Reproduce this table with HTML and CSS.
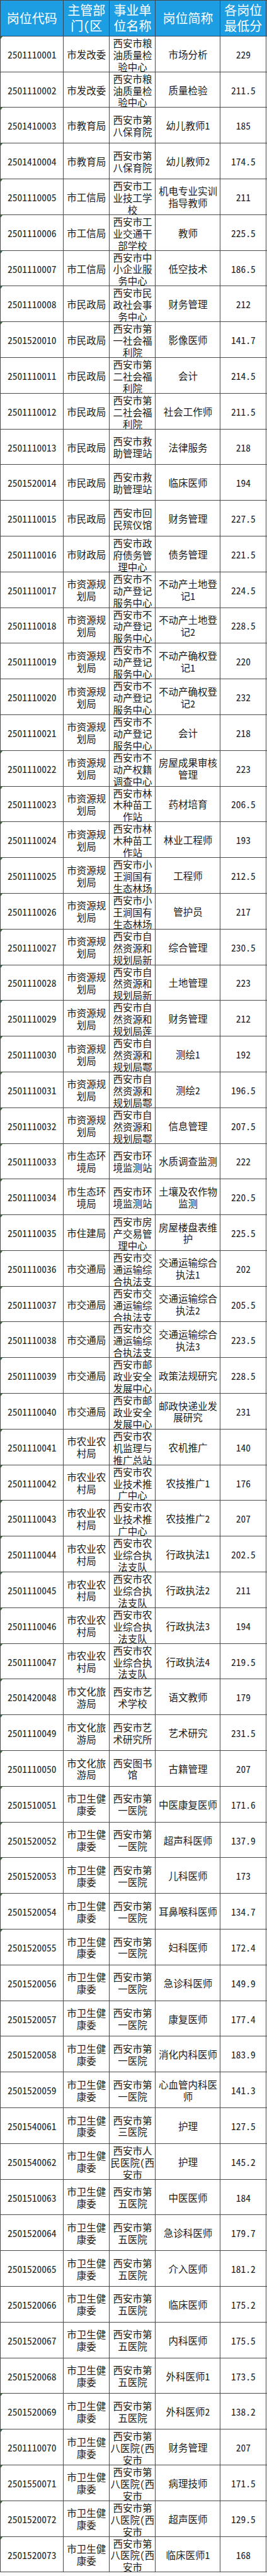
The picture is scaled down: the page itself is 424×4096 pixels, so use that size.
FILE: index.html
```html
<!DOCTYPE html>
<html lang="zh-CN">
<head>
<meta charset="utf-8">
<title>岗位最低分</title>
<link rel="stylesheet" href="styles.css">
</head>
<body>
<div class="sheet">
  <div class="row head"><div class="c">岗位代码</div><div class="c">主管部门（区</div><div class="c">事业单位名称</div><div class="c">岗位简称</div><div class="c">各岗位最低分</div></div>
  <div class="row"><div class="c code m">2501110001</div><div class="c">市发改委</div><div class="c">西安市粮油质量检验中心</div><div class="c">市场分析</div><div class="c">229</div></div>
  <div class="row"><div class="c code">2501110002</div><div class="c">市发改委</div><div class="c">西安市粮油质量检验中心</div><div class="c">质量检验</div><div class="c">211.5</div></div>
  <div class="row"><div class="c code m">2501410003</div><div class="c">市教育局</div><div class="c">西安市第八保育院</div><div class="c">幼儿教师1</div><div class="c">185</div></div>
  <div class="row"><div class="c code m">2501410004</div><div class="c">市教育局</div><div class="c">西安市第八保育院</div><div class="c">幼儿教师2</div><div class="c">174.5</div></div>
  <div class="row"><div class="c code m">2501110005</div><div class="c">市工信局</div><div class="c">西安市工业技工学校</div><div class="c">机电专业实训指导教师</div><div class="c">211</div></div>
  <div class="row"><div class="c code m">2501110006</div><div class="c">市工信局</div><div class="c">西安市工业交通干部学校</div><div class="c">教师</div><div class="c">225.5</div></div>
  <div class="row"><div class="c code m">2501110007</div><div class="c">市工信局</div><div class="c">西安市中小企业服务中心</div><div class="c">低空技术</div><div class="c">186.5</div></div>
  <div class="row"><div class="c code m">2501110008</div><div class="c">市民政局</div><div class="c">西安市民政社会事务中心</div><div class="c">财务管理</div><div class="c">212</div></div>
  <div class="row"><div class="c code m">2501520010</div><div class="c">市民政局</div><div class="c">西安市第一社会福利院</div><div class="c">影像医师</div><div class="c">141.7</div></div>
  <div class="row"><div class="c code">2501110011</div><div class="c">市民政局</div><div class="c">西安市第二社会福利院</div><div class="c">会计</div><div class="c">214.5</div></div>
  <div class="row"><div class="c code">2501110012</div><div class="c">市民政局</div><div class="c">西安市第二社会福利院</div><div class="c">社会工作师</div><div class="c">211.5</div></div>
  <div class="row"><div class="c code">2501110013</div><div class="c">市民政局</div><div class="c">西安市救助管理站</div><div class="c">法律服务</div><div class="c">218</div></div>
  <div class="row"><div class="c code">2501520014</div><div class="c">市民政局</div><div class="c">西安市救助管理站</div><div class="c">临床医师</div><div class="c">194</div></div>
  <div class="row"><div class="c code">2501110015</div><div class="c">市民政局</div><div class="c">西安市回民殡仪馆</div><div class="c">财务管理</div><div class="c">227.5</div></div>
  <div class="row"><div class="c code">2501110016</div><div class="c">市财政局</div><div class="c">西安市政府债务管理中心</div><div class="c">债务管理</div><div class="c">221.5</div></div>
  <div class="row"><div class="c code">2501110017</div><div class="c">市资源规划局</div><div class="c">西安市不动产登记服务中心</div><div class="c">不动产土地登记1</div><div class="c">224.5</div></div>
  <div class="row"><div class="c code">2501110018</div><div class="c">市资源规划局</div><div class="c">西安市不动产登记服务中心</div><div class="c">不动产土地登记2</div><div class="c">228.5</div></div>
  <div class="row"><div class="c code">2501110019</div><div class="c">市资源规划局</div><div class="c">西安市不动产登记服务中心</div><div class="c">不动产确权登记1</div><div class="c">220</div></div>
  <div class="row"><div class="c code">2501110020</div><div class="c">市资源规划局</div><div class="c">西安市不动产登记服务中心</div><div class="c">不动产确权登记2</div><div class="c">232</div></div>
  <div class="row"><div class="c code">2501110021</div><div class="c">市资源规划局</div><div class="c">西安市不动产登记服务中心</div><div class="c">会计</div><div class="c">218</div></div>
  <div class="row"><div class="c code m">2501110022</div><div class="c">市资源规划局</div><div class="c">西安市不动产权籍调查中心</div><div class="c">房屋成果审核管理</div><div class="c">223</div></div>
  <div class="row"><div class="c code m">2501110023</div><div class="c">市资源规划局</div><div class="c">西安市林木种苗工作站</div><div class="c">药材培育</div><div class="c">206.5</div></div>
  <div class="row"><div class="c code m">2501110024</div><div class="c">市资源规划局</div><div class="c">西安市林木种苗工作站</div><div class="c">林业工程师</div><div class="c">193</div></div>
  <div class="row"><div class="c code m">2501110025</div><div class="c">市资源规划局</div><div class="c">西安市小王涧国有生态林场</div><div class="c">工程师</div><div class="c">212.5</div></div>
  <div class="row"><div class="c code m">2501110026</div><div class="c">市资源规划局</div><div class="c">西安市小王涧国有生态林场</div><div class="c">管护员</div><div class="c">217</div></div>
  <div class="row"><div class="c code m">2501110027</div><div class="c">市资源规划局</div><div class="c">西安市自然资源和规划局新</div><div class="c">综合管理</div><div class="c">230.5</div></div>
  <div class="row"><div class="c code m">2501110028</div><div class="c">市资源规划局</div><div class="c">西安市自然资源和规划局新</div><div class="c">土地管理</div><div class="c">223</div></div>
  <div class="row"><div class="c code m">2501110029</div><div class="c">市资源规划局</div><div class="c">西安市自然资源和规划局莲</div><div class="c">财务管理</div><div class="c">212</div></div>
  <div class="row"><div class="c code m">2501110030</div><div class="c">市资源规划局</div><div class="c">西安市自然资源和规划局鄠</div><div class="c">测绘1</div><div class="c">192</div></div>
  <div class="row"><div class="c code m">2501110031</div><div class="c">市资源规划局</div><div class="c">西安市自然资源和规划局鄠</div><div class="c">测绘2</div><div class="c">196.5</div></div>
  <div class="row"><div class="c code m">2501110032</div><div class="c">市资源规划局</div><div class="c">西安市自然资源和规划局鄠</div><div class="c">信息管理</div><div class="c">207.5</div></div>
  <div class="row"><div class="c code m">2501110033</div><div class="c">市生态环境局</div><div class="c">西安市环境监测站</div><div class="c">水质调查监测</div><div class="c">222</div></div>
  <div class="row"><div class="c code m">2501110034</div><div class="c">市生态环境局</div><div class="c">西安市环境监测站</div><div class="c">土壤及农作物监测</div><div class="c">220.5</div></div>
  <div class="row"><div class="c code m">2501110035</div><div class="c">市住建局</div><div class="c">西安市房产交易管理中心</div><div class="c">房屋楼盘表维护</div><div class="c">225.5</div></div>
  <div class="row"><div class="c code m">2501110036</div><div class="c">市交通局</div><div class="c">西安市交通运输综合执法支</div><div class="c">交通运输综合执法1</div><div class="c">202</div></div>
  <div class="row"><div class="c code m">2501110037</div><div class="c">市交通局</div><div class="c">西安市交通运输综合执法支</div><div class="c">交通运输综合执法2</div><div class="c">205.5</div></div>
  <div class="row"><div class="c code m">2501110038</div><div class="c">市交通局</div><div class="c">西安市交通运输综合执法支</div><div class="c">交通运输综合执法3</div><div class="c">223.5</div></div>
  <div class="row"><div class="c code m">2501110039</div><div class="c">市交通局</div><div class="c">西安市邮政业安全发展中心</div><div class="c">政策法规研究</div><div class="c">228.5</div></div>
  <div class="row"><div class="c code m">2501110040</div><div class="c">市交通局</div><div class="c">西安市邮政业安全发展中心</div><div class="c">邮政快递业发展研究</div><div class="c">231</div></div>
  <div class="row"><div class="c code m">2501110041</div><div class="c">市农业农村局</div><div class="c">西安市农机监理与推广总站</div><div class="c">农机推广</div><div class="c">140</div></div>
  <div class="row"><div class="c code m">2501110042</div><div class="c">市农业农村局</div><div class="c">西安市农业技术推广中心</div><div class="c">农技推广1</div><div class="c">176</div></div>
  <div class="row"><div class="c code m">2501110043</div><div class="c">市农业农村局</div><div class="c">西安市农业技术推广中心</div><div class="c">农技推广2</div><div class="c">207</div></div>
  <div class="row"><div class="c code m">2501110044</div><div class="c">市农业农村局</div><div class="c">西安市农业综合执法支队</div><div class="c">行政执法1</div><div class="c">202.5</div></div>
  <div class="row"><div class="c code m">2501110045</div><div class="c">市农业农村局</div><div class="c">西安市农业综合执法支队</div><div class="c">行政执法2</div><div class="c">211</div></div>
  <div class="row"><div class="c code m">2501110046</div><div class="c">市农业农村局</div><div class="c">西安市农业综合执法支队</div><div class="c">行政执法3</div><div class="c">194</div></div>
  <div class="row"><div class="c code m">2501110047</div><div class="c">市农业农村局</div><div class="c">西安市农业综合执法支队</div><div class="c">行政执法4</div><div class="c">219.5</div></div>
  <div class="row"><div class="c code m">2501420048</div><div class="c">市文化旅游局</div><div class="c">西安市艺术学校</div><div class="c">语文教师</div><div class="c">179</div></div>
  <div class="row"><div class="c code m">2501110049</div><div class="c">市文化旅游局</div><div class="c">西安市艺术研究所</div><div class="c">艺术研究</div><div class="c">231.5</div></div>
  <div class="row"><div class="c code m">2501110050</div><div class="c">市文化旅游局</div><div class="c">西安图书馆</div><div class="c">古籍管理</div><div class="c">207</div></div>
  <div class="row"><div class="c code m">2501510051</div><div class="c">市卫生健康委</div><div class="c">西安市第一医院</div><div class="c">中医康复医师</div><div class="c">171.6</div></div>
  <div class="row"><div class="c code m">2501520052</div><div class="c">市卫生健康委</div><div class="c">西安市第一医院</div><div class="c">超声科医师</div><div class="c">137.9</div></div>
  <div class="row"><div class="c code m">2501520053</div><div class="c">市卫生健康委</div><div class="c">西安市第一医院</div><div class="c">儿科医师</div><div class="c">173</div></div>
  <div class="row"><div class="c code m">2501520054</div><div class="c">市卫生健康委</div><div class="c">西安市第一医院</div><div class="c">耳鼻喉科医师</div><div class="c">134.7</div></div>
  <div class="row"><div class="c code m">2501520055</div><div class="c">市卫生健康委</div><div class="c">西安市第一医院</div><div class="c">妇科医师</div><div class="c">172.4</div></div>
  <div class="row"><div class="c code">2501520056</div><div class="c">市卫生健康委</div><div class="c">西安市第一医院</div><div class="c">急诊科医师</div><div class="c">149.9</div></div>
  <div class="row"><div class="c code">2501520057</div><div class="c">市卫生健康委</div><div class="c">西安市第一医院</div><div class="c">康复医师</div><div class="c">177.4</div></div>
  <div class="row"><div class="c code">2501520058</div><div class="c">市卫生健康委</div><div class="c">西安市第一医院</div><div class="c">消化内科医师</div><div class="c">183.9</div></div>
  <div class="row"><div class="c code">2501520059</div><div class="c">市卫生健康委</div><div class="c">西安市第一医院</div><div class="c">心血管内科医师</div><div class="c">141.3</div></div>
  <div class="row"><div class="c code">2501540061</div><div class="c">市卫生健康委</div><div class="c">西安市第三医院</div><div class="c">护理</div><div class="c">127.5</div></div>
  <div class="row"><div class="c code">2501540062</div><div class="c">市卫生健康委</div><div class="c">西安市人民医院（西安市</div><div class="c">护理</div><div class="c">145.2</div></div>
  <div class="row"><div class="c code">2501510063</div><div class="c">市卫生健康委</div><div class="c">西安市第五医院</div><div class="c">中医医师</div><div class="c">184</div></div>
  <div class="row"><div class="c code">2501520064</div><div class="c">市卫生健康委</div><div class="c">西安市第五医院</div><div class="c">急诊科医师</div><div class="c">179.7</div></div>
  <div class="row"><div class="c code">2501520065</div><div class="c">市卫生健康委</div><div class="c">西安市第五医院</div><div class="c">介入医师</div><div class="c">181.2</div></div>
  <div class="row"><div class="c code">2501520066</div><div class="c">市卫生健康委</div><div class="c">西安市第五医院</div><div class="c">临床医师</div><div class="c">175.2</div></div>
  <div class="row"><div class="c code">2501520067</div><div class="c">市卫生健康委</div><div class="c">西安市第五医院</div><div class="c">内科医师</div><div class="c">175.5</div></div>
  <div class="row"><div class="c code">2501520068</div><div class="c">市卫生健康委</div><div class="c">西安市第五医院</div><div class="c">外科医师1</div><div class="c">173.5</div></div>
  <div class="row"><div class="c code m">2501520069</div><div class="c">市卫生健康委</div><div class="c">西安市第五医院</div><div class="c">外科医师2</div><div class="c">138.2</div></div>
  <div class="row"><div class="c code m">2501110070</div><div class="c">市卫生健康委</div><div class="c">西安市第八医院（西安市</div><div class="c">财务管理</div><div class="c">207</div></div>
  <div class="row"><div class="c code m">2501550071</div><div class="c">市卫生健康委</div><div class="c">西安市第八医院（西安市</div><div class="c">病理技师</div><div class="c">171.5</div></div>
  <div class="row"><div class="c code m">2501520072</div><div class="c">市卫生健康委</div><div class="c">西安市第八医院（西安市</div><div class="c">超声医师</div><div class="c">129.5</div></div>
  <div class="row"><div class="c code m">2501520073</div><div class="c">市卫生健康委</div><div class="c">西安市第八医院（西安市</div><div class="c">临床医师1</div><div class="c">168</div></div>
</div>
</body>
</html>
```

FILE: styles.css
```css
html, body {
  margin: 0;
  padding: 0;
  background: #ffffff;
}

.sheet {
  width: 424px;
  box-sizing: border-box;
  display: flex;
  flex-direction: column;
  border-top: 1px solid #4a4a4a;
  font-family: "Noto Sans CJK SC", "Noto Sans", sans-serif;
  font-feature-settings: "hwid" 1;
  color: #1c1c1c;
}

.row {
  display: grid;
  grid-template-columns: 101.3px 73.1px 73px 103.1px 72.7px;
  height: 56.8px;
  box-sizing: border-box;
  border-bottom: 1px solid #4a4a4a;
}

.c {
  position: relative;
  box-sizing: border-box;
  border-right: 1px solid #4a4a4a;
  display: flex;
  flex-direction: column;
  justify-content: safe center;
  overflow: hidden;
  text-align: center;
  font-size: 15.5px;
  line-height: 18.9px;
  padding-top: 1px;
}

.c:first-child {
  border-left: 1px solid #4a4a4a;
}

.m::before {
  content: "";
  position: absolute;
  top: 0;
  left: 0;
  width: 0;
  height: 0;
  border-top: 4px solid #1e7a2c;
  border-right: 3px solid transparent;
}

.head {
  background: #1e9ee2;
  color: #ffffff;
  border-bottom-color: #2b4660;
}

.head .c {
  font-size: 20px;
  line-height: 24.5px;
  border-color: #2b4660;
  padding-top: 0;
}
```
